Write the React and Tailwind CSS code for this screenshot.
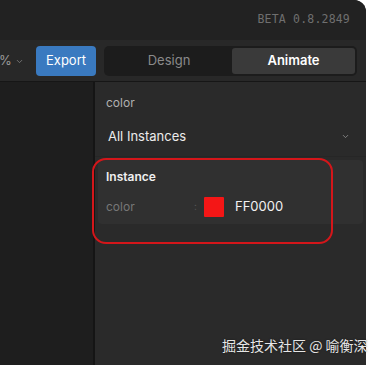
import { ChevronDown } from 'lucide-react';

function TopBar() {
    return (
        <div className="h-[40px] bg-[#222222] flex items-center justify-end pr-[16px]">
            <span className="text-[11.5px] text-[#6f6f6f] tracking-[0.2px]" style={{ fontFamily: '"DejaVu Sans Mono", monospace' }}>
                BETA 0.8.2849
            </span>
        </div>
    );
}

function Toolbar() {
    return (
        <div className="h-[42px] bg-[#282828] flex items-center border-b border-[#161616] pt-[1px]">
            <div className="w-[37px] flex items-center gap-[3px] -ml-[1px] text-[13px] text-[#9a9a9a]">
                <span>%</span>
                <ChevronDown size={9} className="text-[#888]" strokeWidth={2} />
            </div>
            <button className="w-[60px] h-[30px] rounded-[4px] bg-[#3a7ac0] text-white text-[13px]">
                Export
            </button>
            <div className="ml-[8px] w-[253px] h-[30px] rounded-[5px] bg-[#1c1c1c] flex p-[2px]">
                <div className="flex-1 flex items-center justify-center text-[13px] text-[#8a8a8a]">Design</div>
                <div className="w-[123px] rounded-[3px] bg-[#3a3a3a] flex items-center justify-center text-[13px] font-semibold text-white">
                    Animate
                </div>
            </div>
        </div>
    );
}

function InspectorPanel() {
    return (
        <div className="flex-1 bg-[#2a2a2a] pt-[13px]">
            <div className="pl-[11px] text-[12px] text-[#b0b0b0] leading-[16px]">color</div>
            <div className="mt-[16px] pl-[13px] pr-[16px] flex items-center justify-between">
                <span className="text-[13px] text-[#ececec]">All Instances</span>
                <ChevronDown size={9} className="text-[#999]" strokeWidth={2} />
            </div>
            <div className="mt-[9px] border-t border-[#262626] pt-[3px] px-[3px]">
                <div className="rounded-[4px] bg-[#303030] pl-[8px] pt-[9px] pb-[7px]">
                    <div className="text-[12px] font-semibold text-[#f0f0f0] leading-[16px]">Instance</div>
                    <div className="mt-[12px] flex items-center">
                        <span className="w-[88px] text-[12px] text-[#777777]">color</span>
                        <span className="w-[10px] text-[10px] text-[#555]">:</span>
                        <div className="w-[20px] h-[20px] bg-[#f41616] rounded-[1px]" />
                        <span className="ml-[11px] text-[13px] text-[#f2f2f2]">FF0000</span>
                    </div>
                </div>
            </div>
        </div>
    );
}

export default function App() {
    return (
        <div className="relative w-[376px] h-[365px] bg-white overflow-hidden" style={{ fontFamily: 'Inter, "Noto Sans", sans-serif' }}>
            <div className="w-[366px] h-[365px] rounded-tr-[12px] overflow-hidden flex flex-col bg-[#1e1e1e]">
                <TopBar />
                <Toolbar />
                <div className="flex flex-1">
                    <div className="w-[95px] bg-[#1e1e1e] border-r-[2px] border-[#151515]" />
                    <InspectorPanel />
                </div>
            </div>

            <div className="absolute left-[92px] top-[158px] w-[241px] h-[86px] rounded-[14px] border-[2px] border-[#d4161a]" />

            <div
                className="absolute left-[222px] top-[335px] text-[14px] text-[#e6e6e6]"
                style={{ fontFamily: '"Noto Sans CJK SC", sans-serif', textShadow: '0 0 2px rgba(0,0,0,0.5)' }}
            >
                掘金技术社区 @ 喻衡深
            </div>
        </div>
    );
}
